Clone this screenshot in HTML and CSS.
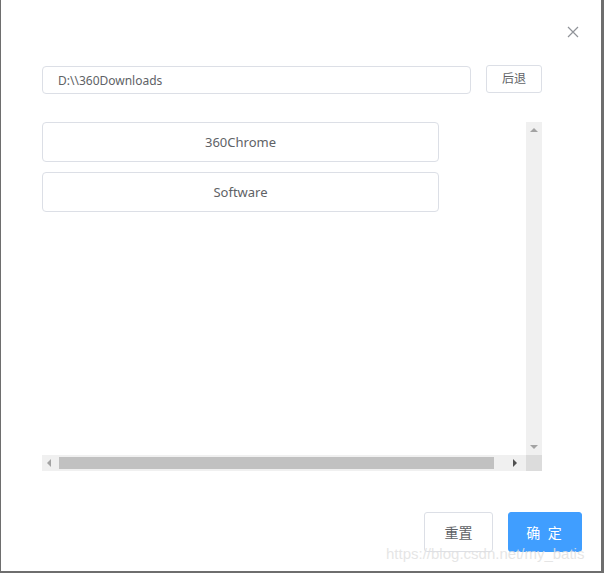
FILE: index.html
```html
<!DOCTYPE html>
<html>
<head>
<meta charset="utf-8">
<link rel="stylesheet" href="styles.css">
</head>
<body>
<div class="dialog">
  <div class="header">
    <button class="close" aria-label="close">
      <svg width="12" height="12" viewBox="0 0 12 12"><path d="M1 1L11 11M11 1L1 11" stroke="#909399" stroke-width="1.2" fill="none"/></svg>
    </button>
  </div>
  <div class="body">
    <div class="pathrow">
      <div class="input">D:\\360Downloads</div>
      <button class="btn back">后退</button>
    </div>
    <div class="scrollbox">
      <div class="main">
        <div class="content">
          <button class="item">360Chrome</button>
          <button class="item">Software</button>
        </div>
        <div class="vbar">
          <span class="arrow up"></span>
          <span class="arrow down"></span>
        </div>
      </div>
      <div class="hrow">
        <div class="hbar">
          <span class="harrow left"></span>
          <div class="thumb"></div>
          <span class="harrow right"></span>
        </div>
        <div class="corner"></div>
      </div>
    </div>
  </div>
  <div class="footer">
    <button class="btn reset">重置</button>
    <button class="btn primary">确 定</button>
  </div>
  <div class="watermark">https://blog.csdn.net/my_batis</div>
</div>
</body>
</html>
```

FILE: styles.css
```css
* { box-sizing: border-box; }
html, body { margin: 0; padding: 0; background: #fff; }
body {
  width: 604px;
  height: 573px;
  font-family: "Noto Sans", "Noto Sans CJK SC", sans-serif;
  color: #606266;
}
.dialog {
  position: relative;
  width: 604px;
  height: 573px;
  border-left: 1px solid #6e6e6e;
  border-right: 3px solid #6e6e6e;
  border-bottom: 2px solid #6e6e6e;
  background: #fff;
  display: flex;
  flex-direction: column;
}
.header {
  height: 66px;
  display: flex;
  justify-content: flex-end;
  padding: 26px 22px 0 0;
}
.close {
  width: 12px; height: 12px; padding: 0; border: 0; background: none;
  display: block;
}
.close svg { display: block; }
.body {
  padding: 0 0 0 41px;
}
.pathrow {
  display: flex;
  align-items: flex-start;
  gap: 15px;
  width: 500px;
}
.input {
  width: 430px;
  height: 28px;
  border: 1px solid #dcdfe6;
  border-radius: 4px;
  padding: 0 15px;
  font-size: 12px;
  line-height: 27px;
  color: #606266;
}
.btn {
  font-family: "Noto Sans", "Noto Sans CJK SC", sans-serif;
  border: 1px solid #dcdfe6;
  border-radius: 3px;
  background: #fff;
  color: #606266;
  padding: 0;
  cursor: pointer;
}
.back {
  width: 56px;
  height: 28px;
  margin-top: -1px;
  font-size: 12px;
  line-height: 26px;
}
.scrollbox {
  margin-top: 28px;
  width: 500px;
  height: 349px;
  display: flex;
  flex-direction: column;
}
.main { display: flex; height: 333px; }
.content {
  width: 484px;
  display: flex;
  flex-direction: column;
  gap: 10px;
}
.item {
  width: 397px;
  height: 40px;
  border-radius: 4px;
  font-size: 13px;
  font-family: "Noto Sans", "Noto Sans CJK SC", sans-serif;
  border: 1px solid #dcdfe6;
  background: #fff;
  color: #606266;
}
.vbar {
  width: 16px;
  background: #f0f0f0;
  display: flex;
  flex-direction: column;
  justify-content: space-between;
  align-items: center;
  padding: 6px 0 6px;
}
.arrow { width: 0; height: 0; border-left: 4px solid transparent; border-right: 4px solid transparent; }
.up { border-bottom: 4px solid #a3a3a3; }
.down { border-top: 4px solid #a3a3a3; }
.hrow { display: flex; height: 16px; }
.hbar {
  width: 484px;
  background: #f0f0f0;
  display: flex;
  align-items: center;
  padding: 0 4px 0 5px;
}
.harrow { width: 0; height: 0; border-top: 4px solid transparent; border-bottom: 4px solid transparent; }
.left { border-right: 4px solid #a3a3a3; }
.right { border-left: 4px solid #505050; }
.thumb { margin: 0 19px 0 8px; width: 435px; height: 12px; background: #c1c1c1; }
.corner { width: 16px; background: #dcdcdc; }
.footer {
  margin-top: 41px;
  display: flex;
  justify-content: flex-end;
  gap: 15px;
  padding-right: 19px;
}
.reset {
  width: 69px; height: 40px; font-size: 14px;
}
.primary {
  width: 74px; height: 40px; font-size: 14px;
  background: #409eff; border-color: #409eff; color: #fff;
  letter-spacing: 2px;
}
.watermark {
  position: absolute;
  left: 385px;
  top: 545px;
  font-family: "Liberation Sans", sans-serif;
  font-size: 15px;
  color: rgba(225, 225, 225, 0.85);
  white-space: nowrap;
}
```
